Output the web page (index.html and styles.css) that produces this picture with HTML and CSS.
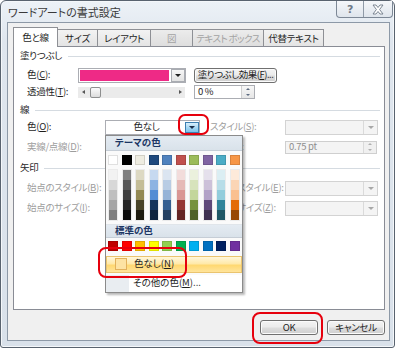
FILE: index.html
```html
<!DOCTYPE html>
<html lang="ja">
<head>
<meta charset="utf-8">
<title>ワードアートの書式設定</title>
<link rel="stylesheet" href="styles.css">
</head>
<body>
<div class="window">
  <div class="titlebar">
    <span class="title">ワードアートの書式設定</span>
    <div class="caption">
      <span class="cbtn help">?</span>
      <span class="cbtn close"><svg width="12" height="11" viewBox="0 0 12 11"><path d="M1 1h3l2 2.5L8 1h3L7.6 5.5 11 10H8L6 7.5 4 10H1l3.4-4.5z" fill="#fff" stroke="#6f7a88" stroke-width="0.9" stroke-linejoin="round"/></svg></span>
    </div>
  </div>
  <div class="client">
    <div class="tabs">
      <div class="tab active w44">色と線</div>
      <div class="tab w41">サイズ</div>
      <div class="tab w54">レイアウト</div>
      <div class="tab w43 disabled">図</div>
      <div class="tab w72 disabled">テキスト ボックス</div>
      <div class="tab w61">代替テキスト</div>
    </div>
    <div class="panel">
      <div class="group g1">塗りつぶし</div>
      <div class="row r1">
        <span class="lbl w51">色(<u>C</u>):</span>
        <div class="combo fill"><span class="pink"></span><span class="arr"></span></div>
        <span class="btn effect">塗りつぶし効果(<u>F</u>)...</span>
      </div>
      <div class="row r2">
        <span class="lbl w51">透過性(<u>T</u>):</span>
        <div class="slider"><span class="sl-arrow left"></span><span class="thumb"></span><span class="sl-arrow right"></span></div>
        <div class="spin pct"><span class="spin-val">0 %</span><span class="spin-btns"><span class="up"></span><span class="down"></span></span></div>
      </div>
      <div class="group g2">線</div>
      <div class="row r3">
        <span class="lbl w78">色(<u>O</u>):</span>
        <div class="combo line">
          <span class="val">色なし</span><span class="arr hot"></span>
          <div class="palette">
            <div class="ph">テーマの色</div>
            <div class="swrow base">
              <span class="sw" style="background:#ffffff"></span>
              <span class="sw" style="background:#000000"></span>
              <span class="sw" style="background:#eeece1"></span>
              <span class="sw" style="background:#1f497d"></span>
              <span class="sw" style="background:#4f81bd"></span>
              <span class="sw" style="background:#c0504d"></span>
              <span class="sw" style="background:#9bbb59"></span>
              <span class="sw" style="background:#8064a2"></span>
              <span class="sw" style="background:#4bacc6"></span>
              <span class="sw" style="background:#f79646"></span>
            </div>
            <div class="shades">
              <div class="col"><span style="background:#f2f2f2"></span><span style="background:#d8d8d8"></span><span style="background:#bfbfbf"></span><span style="background:#a5a5a5"></span><span style="background:#7f7f7f"></span></div>
              <div class="col"><span style="background:#7f7f7f"></span><span style="background:#595959"></span><span style="background:#3f3f3f"></span><span style="background:#262626"></span><span style="background:#0c0c0c"></span></div>
              <div class="col"><span style="background:#ddd9c3"></span><span style="background:#c4bd97"></span><span style="background:#938953"></span><span style="background:#494429"></span><span style="background:#1d1b10"></span></div>
              <div class="col"><span style="background:#c6d9f0"></span><span style="background:#8db3e2"></span><span style="background:#548dd4"></span><span style="background:#17365d"></span><span style="background:#0f243e"></span></div>
              <div class="col"><span style="background:#dbe5f1"></span><span style="background:#b8cce4"></span><span style="background:#95b3d7"></span><span style="background:#366092"></span><span style="background:#244061"></span></div>
              <div class="col"><span style="background:#f2dcdb"></span><span style="background:#e5b9b7"></span><span style="background:#d99694"></span><span style="background:#953734"></span><span style="background:#632423"></span></div>
              <div class="col"><span style="background:#ebf1dd"></span><span style="background:#d7e3bc"></span><span style="background:#c3d69b"></span><span style="background:#76923c"></span><span style="background:#4f6128"></span></div>
              <div class="col"><span style="background:#e5e0ec"></span><span style="background:#ccc1d9"></span><span style="background:#b2a2c7"></span><span style="background:#5f497a"></span><span style="background:#3f3151"></span></div>
              <div class="col"><span style="background:#dbeef3"></span><span style="background:#b7dde8"></span><span style="background:#92cddc"></span><span style="background:#31859b"></span><span style="background:#205867"></span></div>
              <div class="col"><span style="background:#fdeada"></span><span style="background:#fbd5b5"></span><span style="background:#fac08f"></span><span style="background:#e36c09"></span><span style="background:#974806"></span></div>
            </div>
            <div class="ph ph2">標準の色</div>
            <div class="swrow std">
              <span class="sw" style="background:#c00000"></span>
              <span class="sw" style="background:#ff0000"></span>
              <span class="sw" style="background:#ffc000"></span>
              <span class="sw" style="background:#ffff00"></span>
              <span class="sw" style="background:#92d050"></span>
              <span class="sw" style="background:#00b050"></span>
              <span class="sw" style="background:#00b0f0"></span>
              <span class="sw" style="background:#0070c0"></span>
              <span class="sw" style="background:#002060"></span>
              <span class="sw" style="background:#7030a0"></span>
            </div>
            <div class="mitem hot"><span class="icon"><span class="nobox"></span></span><span class="mtext">色なし(<u>N</u>)</span></div>
            <div class="mitem"><span class="icon"></span><span class="mtext">その他の色(<u>M</u>)...</span></div>
          </div>
        </div>
        <span class="lbl rl dis">スタイル(<u>S</u>):</span>
        <div class="combo dcombo"><span class="val"></span><span class="arr"></span></div>
      </div>
      <div class="row r4">
        <span class="lbl w78 dis">実線/点線(<u>D</u>):</span>
        <div class="combo dcombo left"><span class="val"></span><span class="arr"></span></div>
        <span class="lbl rl dis">太さ(<u>W</u>):</span>
        <div class="spin width"><span class="spin-val">0.75 pt</span><span class="spin-btns"><span class="up"></span><span class="down"></span></span></div>
      </div>
      <div class="group g3">矢印</div>
      <div class="row r5">
        <span class="lbl w78 dis">始点のスタイル(<u>B</u>):</span>
        <div class="combo dcombo left"><span class="val"></span><span class="arr"></span></div>
        <span class="lbl rl dis">終点のスタイル(<u>E</u>):</span>
        <div class="combo dcombo"><span class="val"></span><span class="arr"></span></div>
      </div>
      <div class="row r6">
        <span class="lbl w78 dis">始点のサイズ(<u>I</u>):</span>
        <div class="combo dcombo left"><span class="val"></span><span class="arr"></span></div>
        <span class="lbl rl dis">終点のサイズ(<u>Z</u>):</span>
        <div class="combo dcombo"><span class="val"></span><span class="arr"></span></div>
      </div>
    </div>
    <div class="buttons">
      <span class="btn ok">OK</span>
      <span class="btn cancel">キャンセル</span>
    </div>
  </div>
</div>
<div class="ring ring-arrow"></div>
<div class="ring ring-none"></div>
<div class="ring ring-ok"></div>
</body>
</html>
```
FILE: styles.css
```css
* { box-sizing: border-box; margin: 0; padding: 0; }
html, body { background: #ffffff; }
body {
  position: relative;
  margin: 0;
  width: 400px;
  height: 350px;
  overflow: hidden;
  font-family: "Noto Sans CJK JP", "Noto Sans", sans-serif;
  font-size: 9.5px;
  letter-spacing: -0.3px;
  line-height: 1;
  color: #1e1e1e;
  font-feature-settings: "palt";
}
u { text-decoration: underline; text-underline-offset: 1px; }

.window {
  width: 395px;
  height: 348px;
  border: 1px solid #59636f;
  border-radius: 6px 6px 3px 3px;
  background: linear-gradient(#edf2f7, #dfe6ee 40px, #d9e1ea);
  display: flex;
  flex-direction: column;
  padding: 0 4px 6px 6px;
  box-shadow: inset 0 0 0 1px #f4f7fa;
}
.titlebar {
  height: 21px;
  display: flex;
  align-items: flex-start;
}
.title {
  font-size: 11px;
  letter-spacing: 0;
  color: #3a3a3a;
  margin-top: 6px;
  margin-left: 1px;
}
.caption {
  margin-left: auto;
  margin-right: -3px;
  display: flex;
  height: 17px;
  border: 1px solid #7d8896;
  border-top: none;
  border-radius: 0 0 4px 4px;
  background: linear-gradient(#f5f7fa, #dfe5ec);
  overflow: hidden;
}
.cbtn {
  display: flex;
  align-items: center;
  justify-content: center;
  height: 100%;
  color: #6f7a88;
}
.help {
  width: 27px;
  border-right: 1px solid #8f9aa7;
  font-weight: bold;
  font-size: 11px;
  font-family: "DejaVu Sans", sans-serif;
}
.close { width: 28px; }

.client {
  flex: 1;
  border: 1px solid #8d99a7;
  background: #f0f0f0;
  padding: 4px 4px 0 5px;
  display: flex;
  flex-direction: column;
}

.tabs {
  display: flex;
  align-items: flex-end;
  height: 19px;
  position: relative;
  z-index: 2;
}
.tab {
  height: 17px;
  border: 1px solid #8e9095;
  border-bottom: none;
  margin-right: -1px;
  background: linear-gradient(#f3f3f3, #e4e4e4);
  display: flex;
  align-items: center;
  justify-content: center;
  padding-top: 1px;
  white-space: nowrap;
}
.tab.active {
  height: 20px;
  margin-bottom: -1px;
  background: #ffffff;
  position: relative;
  z-index: 3;
}
.tab.disabled { color: #a3a3a3; background: linear-gradient(#ececec, #dedede); }
.w44 { width: 45px; }
.w41 { width: 41px; }
.w54 { width: 54px; }
.w43 { width: 43px; }
.w72 { width: 72px; letter-spacing: -0.6px; }
.w61 { width: 61px; }

.panel {
  height: 264px;
  border: 1px solid #898c95;
  background: #ffffff;
  position: relative;
}

.group {
  display: flex;
  align-items: center;
  height: 14px;
  padding-left: 6px;
  padding-right: 4px;
}
.group::after {
  content: "";
  flex: 1;
  height: 1px;
  background: #d5dbe1;
  margin-left: 6px;
}
.g1 { margin-top: 2px; }
.g2 { margin-top: 3px; }
.g3 { margin-top: 5px; }

.row {
  display: flex;
  align-items: center;
  height: 18px;
  padding-left: 13px;
}
.r1 { margin-top: 3px; }
.r2 { height: 16px; }
.r3 { margin-top: 1px; }
.r4 { margin-top: 2px; }
.r5 { margin-top: 4px; }
.r6 { margin-top: 2px; }

.lbl { white-space: nowrap; }
.lbl.w51 { width: 51px; }
.lbl.w78 { width: 78px; }
.lbl.rl { width: 75px; margin-left: 10px; }
.dis { color: #9d9d9d; }

.combo {
  display: flex;
  height: 15px;
  border: 1px solid #abadb3;
  background: #ffffff;
  position: relative;
}
.combo .val { flex: 1; display: flex; align-items: center; justify-content: center; }
.combo .arr {
  width: 14px;
  border-left: 1px solid #c3c6cb;
  background: linear-gradient(#f6f6f6, #e2e2e2);
  display: flex;
  align-items: center;
  justify-content: center;
}
.combo .arr::after {
  content: "";
  border-left: 3px solid transparent;
  border-right: 3px solid transparent;
  border-top: 3px solid #202020;
}
.combo.fill { width: 108px; padding: 1px; }
.combo.fill .pink { flex: 1; background: #ee2a86; margin-right: 3px; }
.combo.fill .arr { border: 1px solid #a9acb2; margin: -1px; }

.combo.line { width: 95px; }
.combo.line .val { padding-left: 2px; }
.combo.line .arr.hot {
  width: 14px;
  border: 1px solid #3c7fb1;
  background: linear-gradient(#d9f0fc, #a8d8f3 50%, #7ec2ea);
  margin: 1px 0 1px 0;
}
.combo.line .arr.hot::after { border-top-color: #1b2f4a; }

.combo.dcombo {
  width: 93px;
  background: #f4f4f4;
  border-color: #d3d3d3;
}
.combo.dcombo.left { width: 95px; }
.combo.dcombo .arr {
  background: #f4f4f4;
  border-left: 1px solid #dadada;
}
.combo.dcombo .arr::after { border-top-color: #a8a8a8; }

.btn {
  display: flex;
  align-items: center;
  justify-content: center;
  height: 15px;
  border: 1px solid #707070;
  border-radius: 3px;
  background: linear-gradient(#f3f3f3, #ebebeb 48%, #dddddd 52%, #cfcfcf);
  box-shadow: inset 0 0 0 1px #fbfbfb;
  white-space: nowrap;
}
.btn.effect { width: 83px; margin-left: 8px; letter-spacing: -0.5px; }

.slider {
  width: 107px;
  height: 11px;
  background: #ebebeb;
  position: relative;
  display: flex;
  align-items: center;
}
.sl-arrow { position: absolute; top: 3px; border-top: 2.5px solid transparent; border-bottom: 2.5px solid transparent; }
.sl-arrow.left { left: 4px; border-right: 3px solid #555; }
.sl-arrow.right { right: 3px; border-left: 3px solid #555; }
.thumb {
  position: absolute;
  left: 12px;
  top: 0;
  width: 11px;
  height: 11px;
  border: 1px solid #8e8f8f;
  border-radius: 2px;
  background: linear-gradient(#fbfbfb, #dcdcdc);
}

.spin {
  display: flex;
  height: 13px;
  border: 1px solid #abadb3;
  background: #ffffff;
}
.spin .spin-val { flex: 1; display: flex; align-items: center; padding-left: 3px; }
.spin-btns {
  width: 13px;
  display: flex;
  flex-direction: column;
  border-left: 1px solid #d0d0d0;
  background: linear-gradient(#f7f7f7, #e6e6e6);
}
.spin-btns span { flex: 1; display: flex; align-items: center; justify-content: center; }
.spin-btns .up::after { content: ""; border-left: 2.5px solid transparent; border-right: 2.5px solid transparent; border-bottom: 2.5px solid #5c6b80; }
.spin-btns .down::after { content: ""; border-left: 2.5px solid transparent; border-right: 2.5px solid transparent; border-top: 2.5px solid #5c6b80; }
.spin.pct { width: 61px; margin-left: 9px; height: 14px; }
.spin.width { width: 92px; background: #f4f4f4; border-color: #cfcfcf; color: #8e8e8e; }
.spin.width .spin-btns { background: #f0f0f0; border-left-color: #dadada; }
.spin.width .spin-btns .up::after { border-bottom-color: #b0b0b0; }
.spin.width .spin-btns .down::after { border-top-color: #b0b0b0; }

.palette {
  position: absolute;
  left: -1px;
  top: 14px;
  width: 138px;
  height: 158px;
  border: 1px solid #8b8b8b;
  background: #fafafa;
  box-shadow: 2px 2px 2px rgba(0, 0, 0, 0.28);
  z-index: 10;
  display: flex;
  flex-direction: column;
  letter-spacing: 0;
}
.ph {
  height: 15px;
  background: linear-gradient(#e4ebf2, #d9e2ea);
  border-bottom: 1px solid #c5cdd6;
  color: #1c3664;
  font-weight: bold;
  display: flex;
  align-items: center;
  padding-left: 9px;
}
.ph2 { margin-top: 3px; height: 14px; border-top: 1px solid #e0e5ea; }
.swrow {
  display: grid;
  grid-template-columns: repeat(10, 10px);
  column-gap: 3.5px;
  padding-left: 2px;
  margin-top: 4px;
  height: 10px;
}
.swrow .sw { display: block; width: 10px; height: 10px; border: 1px solid rgba(0, 0, 0, 0.12); }
.swrow.std { margin-top: 3px; }
.shades {
  display: grid;
  grid-template-columns: repeat(10, 10px);
  column-gap: 3.5px;
  padding-left: 2px;
  margin-top: 4px;
}
.shades .col { display: flex; flex-direction: column; border: 1px solid rgba(0, 0, 0, 0.06); }
.shades .col span { display: block; height: 10px; }
.mitem {
  height: 17px;
  display: flex;
  align-items: center;
  background: linear-gradient(to right, #e9edf1 23px, #ffffff 23px);
}
.mitem.hot {
  margin-top: 5px;
  border: 1px solid #eac46f;
  background: linear-gradient(#fff7dc, #ffe9a9 45%, #ffd871 55%, #ffe49b);
}
.mitem + .mitem { margin-top: 2px; }
.mitem .icon { width: 23px; height: 100%; display: flex; align-items: center; justify-content: center; padding-left: 4px; }
.nobox { width: 12px; height: 12px; border: 1px solid #e2b15c; background: #fde3a3; }
.mtext { padding-left: 4px; }

.buttons {
  display: flex;
  justify-content: flex-end;
  margin-top: 10px;
  gap: 9px;
}
.btn.ok, .btn.cancel { width: 58px; }

.ring {
  position: absolute;
  border: 2.5px solid #e6000d;
  border-radius: 8px;
  z-index: 20;
}
.ring-arrow { left: 178px; top: 114px; width: 31px; height: 21px; border-radius: 7px; }
.ring-none { left: 98px; top: 247px; width: 89px; height: 31px; }
.ring-ok { left: 252px; top: 312px; width: 71px; height: 32px; }
```
